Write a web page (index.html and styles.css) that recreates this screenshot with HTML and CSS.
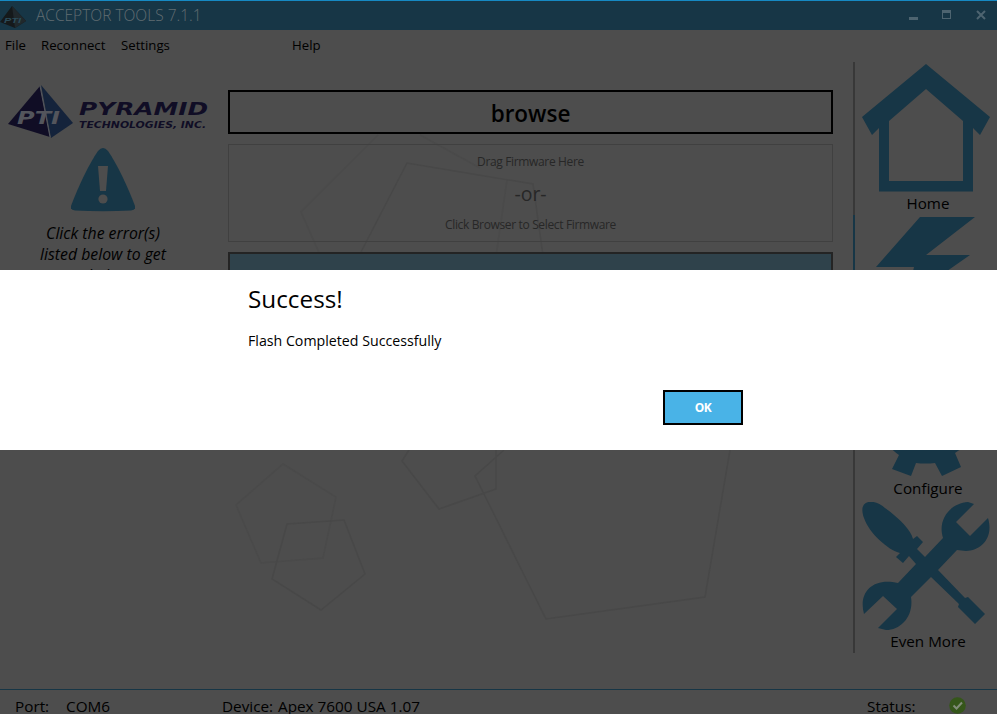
FILE: index.html
```html
<!DOCTYPE html>
<html lang="en">
<head>
<meta charset="utf-8">
<title>Acceptor Tools</title>
<link rel="stylesheet" href="styles.css">
</head>
<body>
<div class="window">
  <svg class="backdrop" viewBox="0 0 997 714" aria-hidden="true">
    <path class="faint" d="M378 135L301 212L340 300M420 135L480 168M507 180L494 270"/>
    <path d="M361 252L407 163L533 184L545 270"/>
    <path class="faint" d="M283 464L336 497L323 558L261 563L236 505Z"/>
    <path d="M287 524L344 520L365 574L321 610L272 579Z"/>
    <path d="M409 450L402 461L439 509L496 489V450M504 450L475 476L546 619L705 597L730 450"/>
  </svg>
  <header class="titlebar">
    <svg class="app-icon" viewBox="0 0 27 24"><path d="M12 1L0 17L15 23L26 16Z" fill="#15191b"/><path d="M12 1L15 23L26 16Z" fill="#20282c"/><text x="4" y="18" textLength="17" lengthAdjust="spacingAndGlyphs">PTI</text></svg>
    <h1>ACCEPTOR TOOLS 7.1.1</h1>
    <svg class="controls" viewBox="0 0 84 29"><path d="M1 16H10V19H1Z"/><path d="M34 9H43V18H34ZM35 12V17H42V12Z" fill-rule="evenodd"/><path d="M69 10L77 18M77 10L69 18" class="close"/></svg>
  </header>
  <nav class="menu"><span class="m-file">File</span><span class="m-rec">Reconnect</span><span class="m-set">Settings</span><span>Help</span></nav>
  <div class="body">
    <aside class="left">
      <svg class="logo" viewBox="0 0 202 54">
        <path d="M32 1L0 39L42 52Z" fill="#100d25"/><path d="M33 0L43 53L65 38Z" fill="#14233b"/><path d="M32 1L42 52" stroke="#535760"/>
        <text class="pti" x="9" y="39" textLength="43" lengthAdjust="spacingAndGlyphs">PTI</text>
        <g class="brand"><text class="big" x="71" y="29.500" textLength="129" lengthAdjust="spacingAndGlyphs">PYRAMID</text><text class="small" x="71" y="42.500" textLength="127" lengthAdjust="spacingAndGlyphs">TECHNOLOGIES, INC.</text></g>
      </svg>
      <svg class="warn" viewBox="0 0 64 64"><path d="M27 3Q32-3 37 3C46 16 57 39 64 58Q65 62 60 62.500Q32 64 4 62.500Q-1 62 0 58C7 39 18 16 27 3Z" fill="#173646"/><path d="M27 18H37L35 43H29Z" fill="#4d4d4d"/><circle cx="32" cy="51" r="4.600" fill="#4d4d4d"/></svg>
      <p class="hint">Click the error(s)<br>listed below to get<br>help</p>
    </aside>
    <main class="main">
      <div class="browse">browse</div>
      <div class="drop"><span class="d1">Drag Firmware Here</span><span class="d2">-or-</span><span class="d3">Click Browser to Select Firmware</span></div>
      <div class="flash"></div>
    </main>
    <aside class="side">
      <div class="item home"><svg viewBox="0 0 128 128"><path fill-rule="evenodd" d="M64 0L128 53L118 71L111 64V127.500H17V64L10 71L0 53ZM64 25L27 57V117H101V57Z"/></svg><span>Home</span></div>
      <div class="item bolt"><svg viewBox="0 0 128 128"><path d="M58 0H113L64 38H108L45 82L52 50H14Z"/></svg></div>
      <div class="item gear"><svg viewBox="0 0 128 128"><path d="M20 90Q32 103 37 106L30 120L49 127L54 114Q63 115 73 114L80 127L99 118L93 104Q104 97 112 88Z"/></svg><span>Configure</span></div>
      <div class="item tools"><svg viewBox="0 0 128 128"><path d="M2 16C-5-3 12-4 23 6C38 17 49 28 51 37L55 34L61 40L55 47L63 55L81 36C75 17 89 1 106 0L112 2L94 20L108 34L126 16C132 36 119 49 104 49L95 48L76 68L103 96L106 95L123 112L113 122L96 105L97 102L69 75L49 95C52 114 39 128 24 128L16 126L35 107L21 94L2 112C-4 90 11 75 36 81L54 62L47 54L41 61L34 55L38 51C26 48 7 31 2 16Z"/></svg><span>Even More</span></div>
    </aside>
  </div>
  <footer class="status"><span class="s-port">Port:</span><span class="s-com">COM6</span><span class="s-dev">Device:</span><span class="s-name">Apex 7600 USA 1.07</span><span class="s-stat">Status:</span><svg class="ok" viewBox="0 0 17 17"><circle cx="8.500" cy="8.500" r="8.300"/><path d="M4.500 8.500L7.500 11.500L13 5.500"/></svg></footer>
  <section class="dialog" role="dialog">
    <div class="dialog-body"><h2>Success!</h2><p>Flash Completed Successfully</p><button>OK</button></div>
  </section>
</div>
</body>
</html>
```

FILE: styles.css
```css
* { box-sizing: border-box; }
body { margin: 0; font-family: "Open Sans", "Noto Sans", sans-serif; color: #000; }
h1, h2, p { margin: 0; font-weight: 400; }
svg { display: block; flex: none; }
.window { position: relative; width: 997px; height: 714px; overflow: hidden; background: #4d4d4d; display: flex; flex-direction: column; }
.backdrop { position: absolute; inset: 0; fill: none; stroke: #484848; stroke-width: 1.5; }
.faint { stroke: #4a4a4a; }
.titlebar { height: 30px; flex: none; display: flex; align-items: center; background: #173646; border-top: 1px solid #168ac4; }
.app-icon { width: 27px; height: 24px; margin-top: 2px; }
.app-icon text { font: italic bold 7px "Liberation Sans", sans-serif; fill: #2b4c5a; }
.titlebar h1 { margin-left: 9px; font-size: 15.5px; font-weight: 300; line-height: 29px; color: #626d72; flex: 1; white-space: nowrap; }
.controls { width: 84px; height: 29px; margin-right: 5px; fill: #4d6470; }
.close { stroke: #4d6470; stroke-width: 2; }
.menu { height: 32px; flex: none; display: flex; padding-left: 5px; font-size: 13.2px; line-height: 31px; }
.menu span { white-space: nowrap; }
.m-file { width: 36px; }
.m-rec { width: 80px; }
.m-set { width: 171px; }
.body { height: 627px; flex: none; display: flex; position: relative; }
.left { width: 228px; padding: 23px 0 0 8px; }
.logo { width: 202px; height: 54px; }
.pti { font: italic bold 17px "DejaVu Sans", sans-serif; fill: #53555c; }
.brand { font-family: "DejaVu Sans", sans-serif; font-weight: bold; font-style: italic; fill: #100d25; }
.big { font-size: 18px; }
.small { font-size: 9.5px; }
.warn { width: 64px; height: 64px; margin: 9px 0 0 63px; }
.hint { width: 190px; margin-top: 11px; text-align: center; font-size: 15.8px; line-height: 21px; font-style: italic; }
.main { width: 605px; padding-top: 28px; display: flex; flex-direction: column; }
.browse { height: 44px; border: 2px solid #000; text-align: center; font-size: 22.5px; line-height: 43px; font-weight: 600; }
.drop { height: 98px; margin-top: 10px; border: 1px solid #404040; display: flex; flex-direction: column; align-items: center; color: #272727; font-size: 12px; letter-spacing: -.35px; line-height: 18px; padding-top: 8px; }
.d2 { font-size: 19.5px; letter-spacing: 0; line-height: 24px; margin: 11px 0 10px; }
.flash { height: 44px; margin-top: 10px; border: 2px solid #242424; background: #2f424b; }
.side { width: 144px; height: 591px; margin-left: 20px; border-left: 2px solid #383838; border-image: linear-gradient(#383838 153px, #173646 153px, #173646 300px, #383838 300px) 1; padding: 2px 0 0 7px; }
.item { width: 128px; fill: #173646; display: flex; flex-direction: column; align-items: center; font-size: 15.2px; line-height: 22px; }
.item svg { width: 128px; height: 128px; }
.item span { margin-left: 4px; white-space: nowrap; }
.home { height: 153px; }
.bolt { height: 132px; }
.gear { height: 153px; }
.status { height: 25px; flex: none; display: flex; border-top: 1px solid #173646; padding-left: 15px; font-size: 15.3px; line-height: 33px; }
.status span { white-space: nowrap; }
.s-port { width: 51px; }
.s-com { width: 156px; }
.s-dev { width: 56px; }
.s-name { width: 589px; }
.s-stat { width: 82px; }
.ok { width: 17px; height: 17px; margin-top: 7px; fill: #35561a; }
.ok path { fill: none; stroke: #818c79; stroke-width: 2; }
.dialog { position: absolute; top: 270px; left: 0; width: 997px; height: 180px; background: #fff; padding-left: 248px; }
.dialog-body { width: 500px; display: flex; flex-direction: column; }
.dialog h2 { font-size: 24.3px; line-height: 32px; margin-top: 13px; }
.dialog p { font-size: 14.2px; line-height: 20px; margin-top: 16px; }
.dialog button { align-self: flex-end; width: 80px; height: 35px; margin: 39px 5px 0 0; padding: 0; border: 2px solid #000; background: #49b3e7; color: #fff; font: bold 12px "Open Sans", sans-serif; letter-spacing: -.4px; }
```
